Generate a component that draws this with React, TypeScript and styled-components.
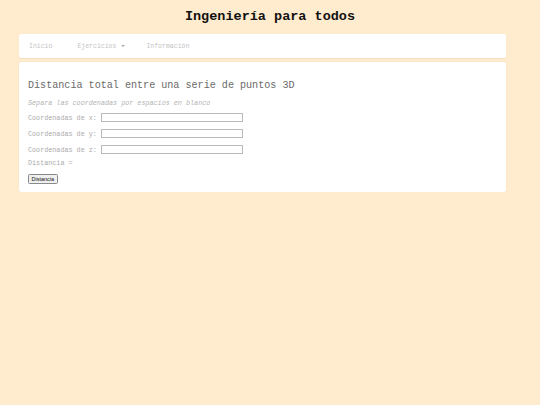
import React from 'react'
import styled, { createGlobalStyle } from 'styled-components'

const GlobalStyle = createGlobalStyle`
  html, body {
    margin: 0;
    padding: 0;
    background: #ffebcd;
    font-family: "Liberation Mono", "Courier New", monospace;
  }
`

const Page = styled.div`
  width: 487px;
  margin-left: 19px;
  padding-top: 7px;
`

const Title = styled.h1`
  margin: 0 0 8px 0;
  text-align: center;
  font-size: 13.5px;
  line-height: 19px;
  font-weight: bold;
  color: #111;
  width: 502px;
`

const NavBar = styled.nav`
  display: flex;
  align-items: center;
  height: 24px;
  padding-left: 10px;
  background: #fff;
  border-radius: 2px;
  box-shadow: 0 1px 1px rgba(0, 0, 0, 0.06);
`

const NavItem = styled.span<{ $gap?: number }>`
  font-size: 6.5px;
  color: #c4c4c4;
  white-space: nowrap;
  margin-right: ${(p) => p.$gap ?? 0}px;
`

const Caret = styled.span`
  display: inline-block;
  margin-left: 5px;
  width: 0;
  height: 0;
  border-left: 2px solid transparent;
  border-right: 2px solid transparent;
  border-top: 2px solid #aaa;
  vertical-align: middle;
`

const Card = styled.section`
  margin-top: 4px;
  background: #fff;
  border-radius: 2px;
  box-shadow: 0 0 1px rgba(0, 0, 0, 0.12);
  padding: 18px 9px 8px 9px;
`

const Heading = styled.h2`
  margin: 0;
  font-size: 10.1px;
  line-height: 12px;
  font-weight: normal;
  color: #6a6a6a;
`

const Hint = styled.p`
  margin: 6.5px 0 2px 0;
  font-size: 6.75px;
  line-height: 9px;
  font-style: italic;
  color: #b4b4b4;
`

const Row = styled.div`
  display: flex;
  align-items: center;
  height: 16px;
`

const Label = styled.label`
  font-size: 6.75px;
  color: #ababab;
  margin-right: 4px;
  white-space: nowrap;
`

const Input = styled.input`
  box-sizing: border-box;
  width: 142px;
  height: 8.5px;
  margin: 0;
  padding: 0;
  border: 1px solid #b9b9b9;
  border-radius: 0.5px;
  background: #fff;
`

const Result = styled.div`
  font-size: 6.75px;
  line-height: 11px;
  color: #ababab;
`

const Button = styled.button`
  display: block;
  box-sizing: border-box;
  margin-top: 5px;
  height: 10px;
  padding: 0 2.5px;
  font-family: "Liberation Sans", Arial, sans-serif;
  font-size: 5.5px;
  line-height: 8px;
  color: #111;
  background: #efefef;
  border: 0.8px solid #8a8a8a;
  border-radius: 1.5px;
`

const axes = ['x', 'y', 'z']

export default function App() {
  return (
    <>
      <GlobalStyle />
      <Page>
        <Title>Ingeniería para todos</Title>
        <NavBar>
          <NavItem $gap={25}>Inicio</NavItem>
          <NavItem $gap={21}>
            Ejercicios
            <Caret />
          </NavItem>
          <NavItem>Información</NavItem>
        </NavBar>
        <Card>
          <Heading>Distancia total entre una serie de puntos 3D</Heading>
          <Hint>Separa las coordenadas por espacios en blanco</Hint>
          {axes.map((a) => (
            <Row key={a}>
              <Label>Coordenadas de {a}:</Label>
              <Input type="text" />
            </Row>
          ))}
          <Result>Distancia =</Result>
          <Button>Distancia</Button>
        </Card>
      </Page>
    </>
  )
}
